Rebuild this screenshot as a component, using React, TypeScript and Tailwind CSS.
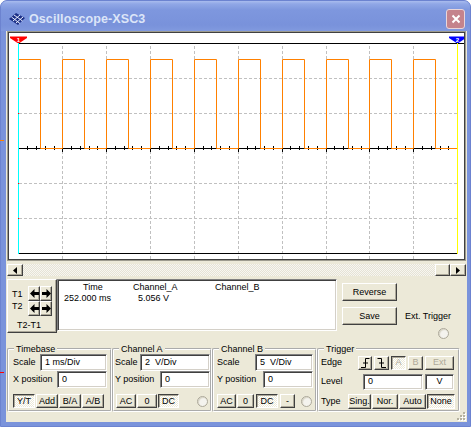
import React from 'react';

const raised =
  'bg-[#ECE9D8] border border-t-white border-l-white border-r-[#404040] border-b-[#404040] shadow-[inset_-1px_-1px_0_#ACA899]';
const pressedBtn =
  'bg-[repeating-conic-gradient(#ffffff_0_25%,#ECE9D8_0_50%)] bg-[length:2px_2px] border border-t-[#404040] border-l-[#404040] border-r-white border-b-white shadow-[inset_1px_1px_0_#ACA899]';
const field =
  'bg-white border border-t-[#808080] border-l-[#808080] border-r-white border-b-white shadow-[inset_1px_1px_0_#404040,inset_-1px_-1px_0_#D4D0C8]';

const Btn = ({
  label,
  className,
  pressed,
  disabled,
}: {
  label: React.ReactNode;
  className: string;
  pressed?: boolean;
  disabled?: boolean;
}) => (
  <div
    className={`flex items-center justify-center leading-none ${pressed ? pressedBtn : raised} ${
      disabled ? 'text-[#ACA899]' : 'text-black'
    } ${className}`}
  >
    {label}
  </div>
);

const Field = ({ value, className, center }: { value: string; className: string; center?: boolean }) => (
  <div className={`flex items-center whitespace-pre ${center ? 'justify-center' : 'pl-[4px]'} ${field} ${className}`}>
    {value}
  </div>
);

const Radio = ({ className }: { className: string }) => (
  <div
    className={`w-[11px] h-[11px] rounded-full border border-[#ACA899] bg-[#F4F3EE] shadow-[inset_1px_1px_1px_#D8D5C6] ${className}`}
  />
);

const Group = ({ title, className, children }: { title: string; className: string; children: React.ReactNode }) => (
  <fieldset className={`border-2 border-white [border-style:groove] rounded-[2px] ${className}`}>
    <legend className="ml-[5px] px-[2px] leading-[10px]">{title}</legend>
    {children}
  </fieldset>
);

const Arrow = ({ dir }: { dir: 'l' | 'r' }) => (
  <svg width="9" height="9" viewBox="0 0 9 9">
    <polygon
      fill="#000"
      points={dir === 'l' ? '0,4.5 4.5,0 4.5,3 9,3 9,6 4.5,6 4.5,9' : '9,4.5 4.5,0 4.5,3 0,3 0,6 4.5,6 4.5,9'}
    />
  </svg>
);

const Edge = ({ rising }: { rising?: boolean }) => (
  <svg width="10" height="10" viewBox="0 0 10 10" fill="none" stroke="#000" strokeWidth="1">
    {rising ? <path d="M1 9.5H5.5V0.5H9.5M3 5H8" /> : <path d="M0.5 0.5H4.5V9.5H9M2 5H7" />}
  </svg>
);

// grid of the scope screen, in the svg's own pixel coords
const xs = Array.from({ length: 11 }, (_, i) => Math.round(9.4 + i * 43.875));
const ys = Array.from({ length: 7 }, (_, i) => 10 + i * 35);
const HI = 26.5;
const LO = 115.5;

const wavePath = () => {
  let d = `M${xs[0] + 0.5} ${LO}V${HI}`;
  for (let i = 0; i < 10; i++) {
    const fall = xs[i] + 22 + 0.5;
    d += `H${fall}V${LO}H${xs[i + 1] + 0.5}`;
    if (i < 9) d += `V${HI}`;
  }
  return d;
};

const Screen = () => {
  const ticks = Array.from({ length: 51 }, (_, j) => Math.round(9.4 + j * 8.775));
  return (
    <svg width="455" height="226" viewBox="0 0 455 226" className="block">
      {xs.slice(1, 10).map((x) => (
        <line key={`v${x}`} x1={x + 0.5} y1={13} x2={x + 0.5} y2={226} stroke="#C0C0C0" strokeDasharray="3 2" />
      ))}
      {[ys[1], ys[2], ys[4], ys[5]].map((y) => (
        <line key={`h${y}`} x1={10} y1={y + 0.5} x2={448} y2={y + 0.5} stroke="#C0C0C0" strokeDasharray="3 2" />
      ))}
      <line x1={9} y1={10.5} x2={455} y2={10.5} stroke="#000" />
      <line x1={9} y1={220.5} x2={449} y2={220.5} stroke="#000" />
      <line x1={9} y1={115.5} x2={449} y2={115.5} stroke="#000" />
      {ticks.map((x, j) => (
        <line key={`t${j}`} x1={x + 0.5} y1={113} x2={x + 0.5} y2={j % 5 === 0 ? 119 : 117} stroke="#000" />
      ))}
      <path d={wavePath()} stroke="#FF8000" fill="none" />
      <line x1={9.5} y1={10} x2={9.5} y2={221} stroke="#00FFFF" />
      <line x1={448.5} y1={10} x2={448.5} y2={221} stroke="#FFFF00" />
      {[ys[1], ys[2], ys[4], ys[5]].map((y) => (
        <rect key={`r${y}`} x={9} y={y} width={1} height={1} fill="#FF0000" />
      ))}
      <polygon points="1,3.5 18,3.5 18,5 10.5,10 8.5,10 1,5" fill="#FF0000" />
      <text x="9.5" y="8.6" fontSize="6" fill="#fff" textAnchor="middle" fontFamily="Liberation Sans, Arial, sans-serif" fontWeight="bold">
        1
      </text>
      <polygon points="440,3.5 457,3.5 457,5 449.5,10 447.5,10 440,5" fill="#0000FF" />
      <text x="448.5" y="8.6" fontSize="6" fill="#fff" textAnchor="middle" fontFamily="Liberation Sans, Arial, sans-serif" fontWeight="bold">
        2
      </text>
    </svg>
  );
};

const TitleIcon = () => (
  <svg width="16" height="12" viewBox="0 0 16 12">
    <polygon points="0,6 7,0 16,5 9,12" fill="#1C2F86" />
    <path d="M2.5 4L11 10.5M5 2L13.5 8M4 8L11 2M7 10L14 4" stroke="#E8EEFF" strokeWidth="1" />
  </svg>
);

export default function App() {
  return (
    <div className="w-[471px] h-[427px] bg-white font-['Liberation_Sans',Arial,sans-serif] text-[9px] text-black relative">
      <div className="w-[471px] h-[427px] rounded-t-[7px] bg-[#7A93DB] border border-[#6C83D0] flex flex-col overflow-hidden">
        {/* title bar */}
        <div className="h-[31px] flex items-start bg-[linear-gradient(to_bottom,#A9BCEE_0px,#90A7E6_3px,#7E97DE_9px,#7992DB_24px,#829BDF_31px)]">
          <div className="mt-[12px] ml-[8px]">
            <TitleIcon />
          </div>
          <div className="ml-[4px] mt-[10px] text-[12.5px] leading-[16px] font-bold text-[#DCE5F8] tracking-[0.1px]">
            Oscilloscope-XSC3
          </div>
          <div className="ml-auto mr-[5px] mt-[8px] w-[19px] h-[20px] rounded-[3px] border border-[#E9D6DA] bg-[#C4838C] flex items-center justify-center">
            <svg width="10" height="10" viewBox="0 0 10 10">
              <path d="M1.5 1.5L8.5 8.5M8.5 1.5L1.5 8.5" stroke="#fff" strokeWidth="2" />
            </svg>
          </div>
        </div>

        {/* client area */}
        <div className="flex-1 ml-[5px] mr-[3px] mb-[4px] bg-[#ECE9D8] flex flex-col">
          <div className="ml-[1px] w-[459px] h-[230px] border border-[#9D9B8E]">
            <div className="w-[457px] h-[228px] border border-[#404040] bg-white">
              <Screen />
            </div>
          </div>

          {/* scrollbar */}
          <div className="ml-[1px] mt-[3px] w-[459px] h-[12px] flex">
            <div className={`w-[16px] h-[12px] flex items-center justify-center ${raised}`}>
              <svg width="4" height="7" viewBox="0 0 4 7">
                <polygon points="4,0 0,3.5 4,7" fill="#000" />
              </svg>
            </div>
            <div className="flex-1 bg-[repeating-conic-gradient(#F7F6F1_0_25%,#E6E3D5_0_50%)] bg-[length:2px_2px]" />
            <div className={`w-[15px] h-[12px] ${raised}`} />
            <div className={`w-[16px] h-[12px] flex items-center justify-center ${raised}`}>
              <svg width="4" height="7" viewBox="0 0 4 7">
                <polygon points="0,0 4,3.5 0,7" fill="#000" />
              </svg>
            </div>
          </div>

          {/* cursors / readout row */}
          <div className="ml-[1px] mt-[3px] h-[60px] flex items-start">
            <div className={`w-[50px] h-[54px] flex flex-col ${raised}`}>
              <div className="flex pt-[6px] pl-[4px]">
                <div className="w-[16px] flex flex-col leading-[12px] pt-[2px]">
                  <span>T1</span>
                  <span>T2</span>
                </div>
                <div className="grid grid-cols-[12px_12px]">
                  <Btn label={<Arrow dir="l" />} className="h-[15px]" />
                  <Btn label={<Arrow dir="r" />} className="h-[15px]" />
                  <Btn label={<Arrow dir="l" />} className="h-[15px]" />
                  <Btn label={<Arrow dir="r" />} className="h-[15px]" />
                </div>
              </div>
              <div className="pl-[9px] mt-[4px] leading-[11px]">T2-T1</div>
            </div>
            <div className={`w-[280px] h-[52px] ${field} pt-[2px] grid grid-cols-[75px_82px_1fr] auto-rows-[11px] leading-[11px]`}>
              <span className="pl-[25px]">Time</span>
              <span>Channel_A</span>
              <span>Channel_B</span>
              <span className="pl-[6px]">252.000 ms</span>
              <span className="pl-[5px]">5.056 V</span>
              <span />
            </div>
            <div className="ml-[5px] w-[55px] flex flex-col">
              <Btn label="Reverse" className="mt-[4px] h-[18px]" />
              <Btn label="Save" className="mt-[6px] h-[18px]" />
            </div>
            <div className="ml-[8px] flex flex-col">
              <span className="mt-[32px] leading-[11px]">Ext. Trigger</span>
              <Radio className="mt-[6px] ml-[33px]" />
            </div>
          </div>

          {/* control groups */}
          <div className="ml-[1px] mt-[5px] flex">
            <Group title="Timebase" className="w-[105px] h-[68px]">
              <div className="flex flex-col pl-[4px]">
                <div className="flex items-center h-[17px]">
                  <span className="w-[27px]">Scale</span>
                  <Field value="1 ms/Div" className="w-[67px] h-[17px]" />
                </div>
                <div className="flex items-center h-[17px]">
                  <span className="w-[44px]">X position</span>
                  <Field value="0" className="w-[50px] h-[17px]" />
                </div>
                <div className="flex gap-[1px] mt-[6px]">
                  <Btn label="Y/T" pressed className="w-[22px] h-[14px]" />
                  <Btn label="Add" className="w-[22px] h-[14px]" />
                  <Btn label="B/A" className="w-[22px] h-[14px]" />
                  <Btn label="A/B" className="w-[22px] h-[14px]" />
                </div>
              </div>
            </Group>

            <Group title="Channel A" className="w-[100px] h-[68px]">
              <div className="flex flex-col pl-[1px]">
                <div className="flex items-center h-[17px]">
                  <span className="w-[25px]">Scale</span>
                  <Field value="2  V/Div" className="w-[70px] h-[17px]" />
                </div>
                <div className="flex items-center h-[17px]">
                  <span className="w-[45px]">Y position</span>
                  <Field value="0" className="w-[50px] h-[17px]" />
                </div>
                <div className="flex items-center gap-[1px] mt-[6px] pl-[1px]">
                  <Btn label="AC" className="w-[20px] h-[14px]" />
                  <Btn label="0" className="w-[20px] h-[14px]" />
                  <Btn label="DC" pressed className="w-[21px] h-[14px]" />
                  <Radio className="ml-[17px]" />
                </div>
              </div>
            </Group>

            <Group title="Channel B" className="w-[105px] h-[68px]">
              <div className="flex flex-col pl-[3px]">
                <div className="flex items-center h-[17px]">
                  <span className="w-[38px]">Scale</span>
                  <Field value="5  V/Div" className="w-[58px] h-[17px]" />
                </div>
                <div className="flex items-center h-[17px]">
                  <span className="w-[46px]">Y position</span>
                  <Field value="0" className="w-[50px] h-[17px]" />
                </div>
                <div className="flex items-center mt-[6px]">
                  <Btn label="AC" className="w-[19px] h-[14px]" />
                  <Btn label="0" className="ml-[1px] w-[17px] h-[14px]" />
                  <Btn label="DC" pressed className="ml-[2px] w-[22px] h-[14px]" />
                  <Btn label="-" className="ml-[2px] w-[15px] h-[14px]" />
                  <Radio className="ml-[6px]" />
                </div>
              </div>
            </Group>

            <Group title="Trigger" className="w-[143px] h-[68px]">
              <div className="flex flex-col pl-[2px]">
                <div className="flex items-center h-[17px]">
                  <span className="w-[37px]">Edge</span>
                  <Btn label={<Edge rising />} className="w-[14px] h-[14px]" />
                  <Btn label={<Edge />} className="ml-[2px] w-[15px] h-[14px]" />
                  <Btn label="A" pressed disabled className="ml-[2px] w-[15px] h-[14px]" />
                  <Btn label="B" disabled className="ml-[2px] w-[15px] h-[14px]" />
                  <Btn label="Ext" disabled className="ml-[2px] w-[29px] h-[14px]" />
                </div>
                <div className="flex items-center mt-[3px] h-[16px]">
                  <span className="w-[42px]">Level</span>
                  <Field value="0" className="w-[60px] h-[16px]" />
                  <Field value="V" center className="ml-[2px] w-[29px] h-[16px]" />
                </div>
                <div className="flex items-center mt-[4px]">
                  <span className="w-[27px]">Type</span>
                  <Btn label="Sing." className="w-[23px] h-[15px]" />
                  <Btn label="Nor." className="ml-[1px] w-[26px] h-[15px]" />
                  <Btn label="Auto" className="ml-[1px] w-[27px] h-[15px]" />
                  <Btn label="None" pressed className="ml-[1px] w-[28px] h-[15px]" />
                </div>
              </div>
            </Group>
          </div>

          <div className="mt-auto flex justify-end pr-[1px] pb-[1px]">
            <svg width="10" height="9" viewBox="0 0 10 9">
              {[
                [7, 0],
                [4, 3],
                [7, 3],
                [1, 6],
                [4, 6],
                [7, 6],
              ].map(([x, y]) => (
                <g key={`${x}-${y}`}>
                  <rect x={x + 1} y={y + 1} width="2" height="2" fill="#fff" />
                  <rect x={x} y={y} width="2" height="2" fill="#B5B29F" />
                </g>
              ))}
            </svg>
          </div>
        </div>
      </div>
      <div className="absolute left-0 top-[140px] w-[4px] h-[1px] bg-[#FF8000]" />
      <div className="absolute left-0 top-[372px] w-[4px] h-[1px] bg-[#FF0000]" />
    </div>
  );
}
